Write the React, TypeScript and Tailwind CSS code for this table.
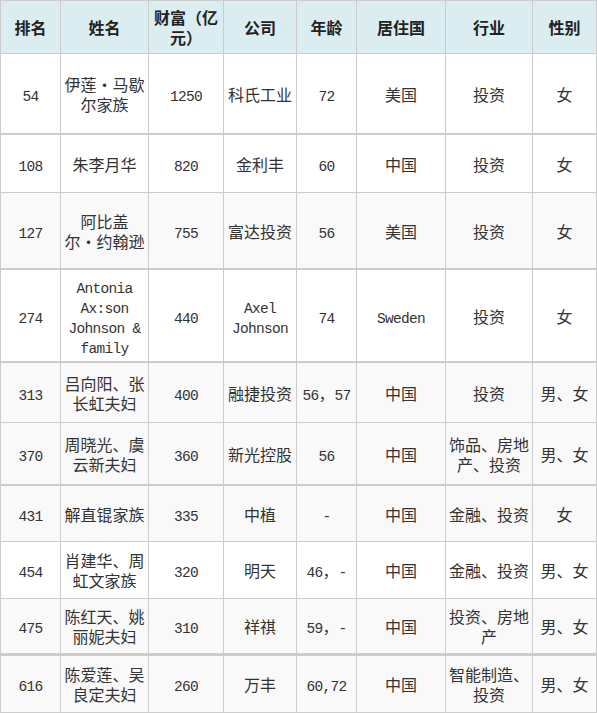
import React from "react";

type Row = {
  h: string;
  bg: string;
  bb: string;
  cells: string[][];
};

const cols = "grid grid-cols-[61px_88px_75px_73px_60px_89px_87px_64px]";

const rows: Row[] = [
  { h: "h-[81px]", bg: "bg-white", bb: "border-b-2", cells: [["54"], ["伊莲·马歇", "尔家族"], ["1250"], ["科氏工业"], ["72"], ["美国"], ["投资"], ["女"]] },
  { h: "h-[58px]", bg: "bg-white", bb: "border-b", cells: [["108"], ["朱李月华"], ["820"], ["金利丰"], ["60"], ["中国"], ["投资"], ["女"]] },
  { h: "h-[77px]", bg: "bg-[#f9f9f9]", bb: "border-b-2", cells: [["127"], ["阿比盖", "尔·约翰逊"], ["755"], ["富达投资"], ["56"], ["美国"], ["投资"], ["女"]] },
  { h: "h-[93px]", bg: "bg-white", bb: "border-b-2", cells: [["274"], ["Antonia", "Ax:son", "Johnson &", "family"], ["440"], ["Axel", "Johnson"], ["74"], ["Sweden"], ["投资"], ["女"]] },
  { h: "h-[60px]", bg: "bg-[#f9f9f9]", bb: "border-b", cells: [["313"], ["吕向阳、张", "长虹夫妇"], ["400"], ["融捷投资"], ["56，57"], ["中国"], ["投资"], ["男、女"]] },
  { h: "h-[63px]", bg: "bg-[#f9f9f9]", bb: "border-b-2", cells: [["370"], ["周晓光、虞", "云新夫妇"], ["360"], ["新光控股"], ["56"], ["中国"], ["饰品、房地", "产、投资"], ["男、女"]] },
  { h: "h-[56px]", bg: "bg-[#f9f9f9]", bb: "border-b", cells: [["431"], ["解直锟家族"], ["335"], ["中植"], ["-"], ["中国"], ["金融、投资"], ["女"]] },
  { h: "h-[57px]", bg: "bg-white", bb: "border-b", cells: [["454"], ["肖建华、周", "虹文家族"], ["320"], ["明天"], ["46，-"], ["中国"], ["金融、投资"], ["男、女"]] },
  { h: "h-[57px]", bg: "bg-[#f9f9f9]", bb: "border-b-[3px]", cells: [["475"], ["陈红天、姚", "丽妮夫妇"], ["310"], ["祥祺"], ["59，-"], ["中国"], ["投资、房地", "产"], ["男、女"]] },
  { h: "h-[57px]", bg: "bg-[#f9f9f9]", bb: "border-b", cells: [["616"], ["陈爱莲、吴", "良定夫妇"], ["260"], ["万丰"], ["60,72"], ["中国"], ["智能制造、", "投资"], ["男、女"]] },
];

const header: string[][] = [["排名"], ["姓名"], ["财富（亿", "元）"], ["公司"], ["年龄"], ["居住国"], ["行业"], ["性别"]];

function Txt({ s }: { s: string }) {
  const parts = s.split(/([\x20-\x7E]+)/).filter((p) => p.length > 0);
  return (
    <>
      {parts.map((p, i) =>
        /^[\x20-\x7E]+$/.test(p) ? (
          <span key={i} className="font-['Liberation_Mono',monospace] text-[14.5px] leading-[14px] tracking-[-0.7px] whitespace-pre">
            {p}
          </span>
        ) : (
          <span key={i}>{p}</span>
        )
      )}
    </>
  );
}

function Cell({ lines, first, bold }: { lines: string[]; first: boolean; bold?: boolean }) {
  return (
    <div
      className={`flex items-center justify-center text-center border-r border-[#cccccc] px-[3px] ${first ? "border-l" : ""} ${bold ? "font-bold text-[#222]" : "text-[#333]"}`}
    >
      <div className="leading-[20px] whitespace-nowrap">
        {lines.map((l, i) => (
          <React.Fragment key={i}>
            {i > 0 && <br />}
            <Txt s={l} />
          </React.Fragment>
        ))}
      </div>
    </div>
  );
}

export default function App() {
  return (
    <div className="w-[597px] h-[713px] overflow-hidden bg-white font-['Noto_Sans_CJK_SC',sans-serif] text-[16px]">
      <div className={`${cols} h-[54px] bg-[#dcedf2] border-t border-b border-[#cccccc]`}>
        {header.map((c, i) => (
          <Cell key={i} lines={c} first={i === 0} bold />
        ))}
      </div>
      {rows.map((r, ri) => (
        <div key={ri} className={`${cols} ${r.h} ${r.bg} ${r.bb} border-[#cccccc]`}>
          {r.cells.map((c, i) => (
            <Cell key={i} lines={c} first={i === 0} />
          ))}
        </div>
      ))}
    </div>
  );
}
